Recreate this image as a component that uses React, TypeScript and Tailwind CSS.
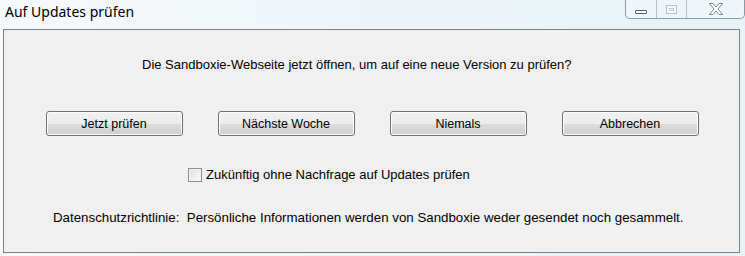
import { useState } from "react";

const buttons = ["Jetzt prüfen", "Nächste Woche", "Niemals", "Abbrechen"];

function CaptionButtons() {
  return (
    <div className="flex h-[19px] w-[120px] overflow-hidden rounded-b-[5px] border border-t-0 border-[#8d9aa6] bg-[#f2f6f9]/70">
      <div className="flex w-[31px] items-end justify-center border-r border-[#b6c2cc] pb-[4px]">
        <div className="h-[4px] w-[12px] rounded-[1px] border border-[#535c64] bg-white" />
      </div>
      <div className="flex w-[30px] items-center justify-center border-r border-[#b6c2cc]">
        <div className="flex h-[9px] w-[11px] items-center justify-center border border-[#b9c3cb] bg-white/60">
          <div className="h-[3px] w-[5px] border border-[#c5cdd4]" />
        </div>
      </div>
      <div className="flex flex-1 items-center justify-center">
        <svg width="16" height="12" viewBox="0 0 16 12">
          <path
            d="M1.5 0.5 H5 L8 4 L11 0.5 H14.5 L10 6 L14.5 11.5 H11 L8 8 L5 11.5 H1.5 L6 6 Z"
            fill="#ffffff"
            stroke="#7b858e"
            strokeWidth="1"
            strokeLinejoin="round"
          />
        </svg>
      </div>
    </div>
  );
}

export default function App() {
  const [auto, setAuto] = useState(false);

  return (
    <div className="flex h-[256px] w-[745px] flex-col overflow-hidden bg-gradient-to-r from-[#f6f9fb] via-[#eef5f9] to-[#e6f2f7] font-['Liberation_Sans',Arial,sans-serif]">
      {/* Title bar */}
      <div className="flex h-[29px] shrink-0 items-start justify-between">
        <div className="pl-[5px] pt-[3px] font-['Noto_Sans',sans-serif] text-[14px] leading-[18px] text-black">
          Auf Updates prüfen
        </div>
        <CaptionButtons />
      </div>

      {/* Client area */}
      <div className="ml-[3px] flex h-[224px] w-[737px] flex-col border border-[#7f7f7f] bg-[#f0f0f0] text-[13px] text-black">
        <p className="pl-[138px] pt-[27px] leading-[15px]">
          Die Sandboxie-Webseite jetzt öffnen, um auf eine neue Version zu prüfen?
        </p>

        <div className="mt-[39px] flex justify-center gap-[35px] pl-[1px]">
          {buttons.map((label) => (
            <button
              key={label}
              type="button"
              className="h-[25px] w-[137px] rounded-[3px] border border-[#707070] bg-[linear-gradient(to_bottom,#f2f2f2_0%,#ebebeb_50%,#dddddd_51%,#cfcfcf_100%)] text-[12.5px] font-normal leading-[14px] text-black shadow-[inset_0_0_0_1px_#fcfcfc]"
            >
              {label}
            </button>
          ))}
        </div>

        <label className="mt-[31px] flex items-center gap-[4px] pl-[184px] leading-[15px]">
          <span
            onClick={() => setAuto(!auto)}
            className="flex h-[14px] w-[14px] items-center justify-center border border-[#8e8f8f] bg-[linear-gradient(135deg,#dcdcdc,#fefefe)] shadow-[inset_0_0_0_1px_#f4f4f4]"
          >
            {auto && <span className="text-[10px] leading-none">✓</span>}
          </span>
          Zukünftig ohne Nachfrage auf Updates prüfen
        </label>

        <p className="pl-[49px] pt-[28px] text-[13.3px] leading-[15px]">
          Datenschutzrichtlinie:&nbsp; Persönliche Informationen werden von Sandboxie weder gesendet noch gesammelt.
        </p>
      </div>
    </div>
  );
}
